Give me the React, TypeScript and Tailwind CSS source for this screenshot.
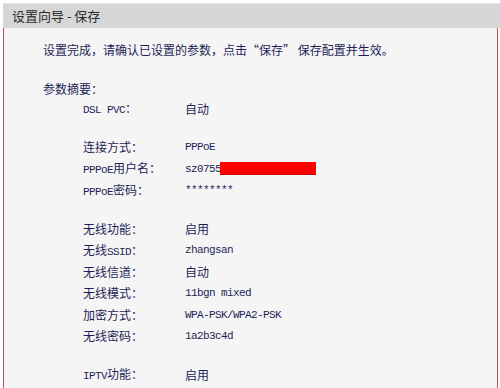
import React from 'react';

// Router wizard "save" summary page
type Row = { label: string; value: string; masked?: boolean };

const groups: Row[][] = [
    [{ label: 'DSL PVC：', value: '自动' }],
    [
        { label: '连接方式：', value: 'PPPoE' },
        { label: 'PPPoE用户名：', value: 'sz0755', masked: true },
        { label: 'PPPoE密码：', value: '********' },
    ],
    [
        { label: '无线功能：', value: '启用' },
        { label: '无线SSID：', value: 'zhangsan' },
        { label: '无线信道：', value: '自动' },
        { label: '无线模式：', value: '11bgn mixed' },
        { label: '加密方式：', value: 'WPA-PSK/WPA2-PSK' },
        { label: '无线密码：', value: '1a2b3c4d' },
    ],
    [{ label: 'IPTV功能：', value: '启用' }],
];

const cjk = "font-['Noto_Sans_CJK_SC',sans-serif]";

// latin runs look like a bitmap monospace in the original, so give them a mono face
const Mixed = ({ text }: { text: string }) => (
    <>
        {text.split(/([\x20-\x7e]+)/).filter(Boolean).map((part, i) =>
            /^[\x20-\x7e]+$/.test(part) ? (
                <span key={i} className="font-['Liberation_Mono',monospace] text-[11px] tracking-[-0.6px] whitespace-pre">
                    {part}
                </span>
            ) : (
                <span key={i}>{part}</span>
            )
        )}
    </>
);

export default function App() {
    return (
        <div className={`w-[500px] h-[388px] overflow-hidden bg-white pt-[3px] pl-[3px] ${cjk}`}>
            {/* Header */}
            <div className="h-[25px] bg-[#d6d6d6] border-t border-[#e8e8e8] flex items-center pl-[9px] text-[13px] text-[#2b2b2b]">
                设置向导 - 保存
            </div>

            {/* Body */}
            <div className="w-[495px] h-[400px] bg-[#f5f5f5] border-l border-r border-[#b85050] pt-[11px] pl-[39px] text-[12px] text-[#1e1e58]">
                <div className="h-[21.5px] leading-[21.5px]">
                    设置完成，请确认已设置的参数，点击“保存” 保存配置并生效。
                </div>
                <div className="mt-[17px] h-[21.5px] leading-[21.5px]">参数摘要：</div>
                <div className="pl-[40px] -mt-[1px]">
                    {groups.map((group, gi) => (
                        <div key={gi} className={gi > 0 ? 'mt-[17px]' : ''}>
                            {group.map((row) => (
                                <div key={row.label} className="flex h-[21.5px] items-center">
                                    <span className="w-[102px] shrink-0">
                                        <Mixed text={row.label} />
                                    </span>
                                    <span className="flex items-center">
                                        <Mixed text={row.value} />
                                        {row.masked && (
                                            <span className="ml-[-1px] w-[96px] h-[13px] bg-[#ff0000] border-b border-[#d00000]" />
                                        )}
                                    </span>
                                </div>
                            ))}
                        </div>
                    ))}
                </div>
            </div>
        </div>
    );
}
